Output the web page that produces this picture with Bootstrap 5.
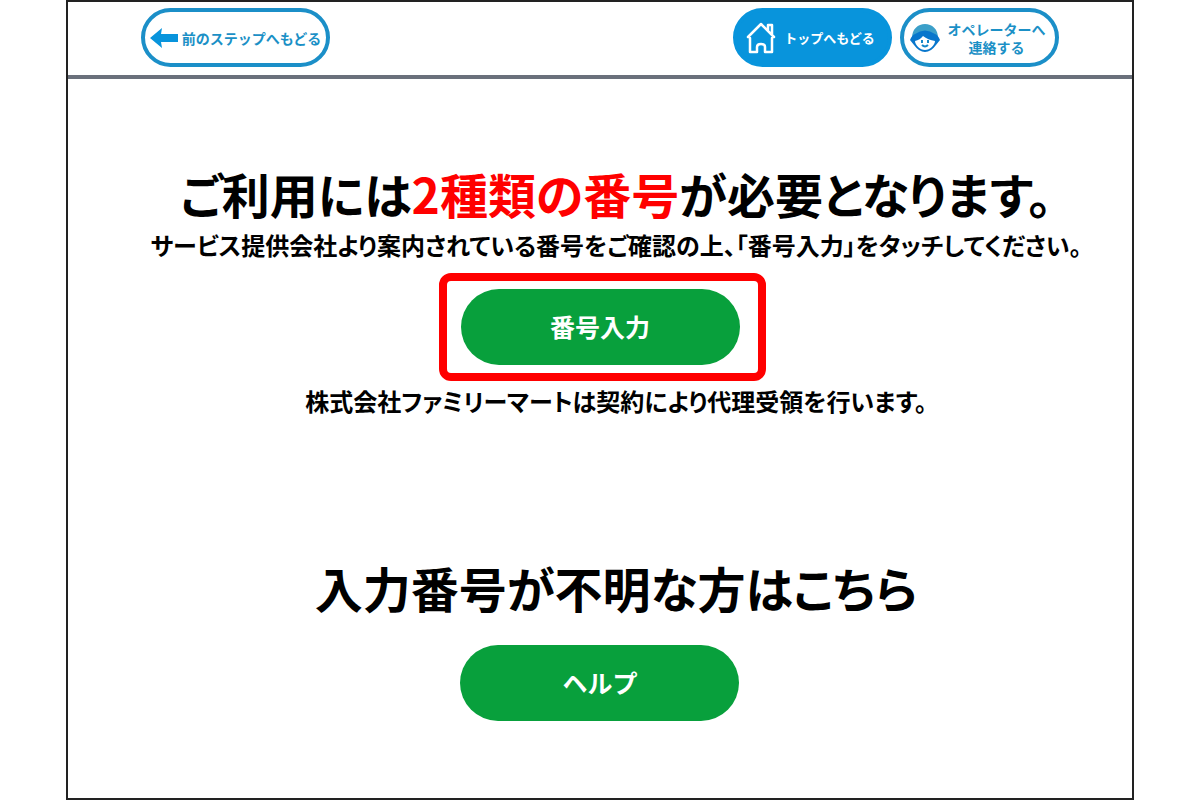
<!DOCTYPE html>
<html lang="ja">
<head>
<meta charset="utf-8">
<meta name="viewport" content="width=device-width, initial-scale=1">
<title>番号入力のご案内</title>
<link href="https://cdn.jsdelivr.net/npm/bootstrap@5.3.0/dist/css/bootstrap.min.css" rel="stylesheet">
<style>
  body { font-family: "Noto Sans CJK JP", sans-serif; font-feature-settings: "palt"; color: #000; }
  .kiosk { width: 89%; border: 2px solid #222; }
  .kiosk-header { border-bottom: 4px solid #6a707b; padding: 6px 73px 8px; }
  .pill { --bs-btn-border-radius: 30px; --bs-btn-border-width: 4px; --bs-btn-padding-y: 0; --bs-btn-padding-x: 6px;
    --bs-btn-font-size: 14px; --bs-btn-font-weight: 700; --bs-btn-line-height: 18px;
    --bs-btn-color: #1b90c6; --bs-btn-bg: #fff; --bs-btn-border-color: #1b8fc8; height: 59px; }
  .pill svg { flex: none; }
  .pill-solid { --bs-btn-color: #fff; --bs-btn-bg: #0894dc; --bs-btn-border-color: #0894dc; --bs-btn-font-size: 13px; }
  .pill-back { width: 189px; }
  .pill-side { width: 159px; padding-right: 10px; }
  .headline { font-size: 48px; line-height: 56px; font-weight: 700; }
  .guide { font-size: 24px; line-height: 32px; font-weight: 700; }
  .key { color: #f00; }
  .focus-frame { border: 8px solid #f00; border-radius: 12px; padding: 8px 18px 8px 14px; }
  .action { --bs-btn-border-radius: 38px; --bs-btn-border-width: 0; --bs-btn-font-size: 25px; --bs-btn-font-weight: 700;
    --bs-btn-color: #fff; --bs-btn-bg: #08a03c; --bs-btn-hover-bg: #078a34; --bs-btn-hover-color: #fff; width: 279px; height: 76px; }
  .kiosk-main { padding-top: 86px; }
  .intro { margin-bottom: 12px; }
  .shifted { padding-left: 32px; }
  .help-area { margin-top: 142px; }
  .help-title { margin-bottom: 30px; }
</style>
</head>
<body>
<div class="kiosk mx-auto min-vh-100 d-flex flex-column">
  <header class="kiosk-header d-flex justify-content-between flex-wrap gap-2">
    <button type="button" class="btn pill pill-back d-flex align-items-center justify-content-center text-nowrap">
      <svg width="28" height="20" viewBox="0 0 28 20" aria-hidden="true"><path fill="#0894dc" d="M0 10 12 0 11 6H28V14H11L12 20Z"/></svg>
      <span class="ms-1">前のステップへもどる</span>
    </button>
    <div class="d-flex gap-2">
      <button type="button" class="btn pill pill-solid pill-side d-flex align-items-center justify-content-center text-nowrap">
        <svg width="30" height="32" viewBox="0 0 30 32" fill="none" stroke="#fff" stroke-width="2.5" stroke-linejoin="round" stroke-linecap="round" aria-hidden="true"><path d="M2 15 15 2 28 15M22 8V3h4v9M4 16v14h7v-5q0-3 4-3t4 3v5h7V16"/></svg>
        <span class="ms-2">トップへもどる</span>
      </button>
      <button type="button" class="btn pill pill-side d-flex align-items-center justify-content-center text-nowrap">
        <svg width="30" height="30" viewBox="0 0 30 30" aria-hidden="true">
          <path fill="#3b9fc9" d="M2 15C2 6 8 1 15 1s13 5 13 14Z"/>
          <path fill="#0876cc" d="M0 17Q2 12 5 11 15 4 25 11q3 1 5 6l-4 5Q21 29 15 29T4 22Z"/>
          <path fill="#fff" d="M5 18q5-1 8-5 5 4 12 5c0 4-5 9-10 9S5 22 5 18Z"/>
          <path d="M12 17v3M18 17v3M12 22q3 3 6 0" stroke="#1787c9" stroke-width="2" fill="none"/>
        </svg>
        <span class="ms-2">オペレーターへ<br>連絡する</span>
      </button>
    </div>
  </header>
  <main class="kiosk-main text-center d-flex flex-column align-items-center">
    <h1 class="headline shifted mb-2">ご利用には<span class="key">2種類の番号</span>が必要となります。</h1>
    <p class="guide intro shifted">サービス提供会社より案内されている番号をご確認の上、「番号入力」をタッチしてください。</p>
    <div class="focus-frame ms-1"><button type="button" class="btn action">番号入力</button></div>
    <p class="guide shifted mt-1 mb-0">株式会社ファミリーマートは契約により代理受領を行います。</p>
    <section class="help-area d-flex flex-column align-items-center">
      <h2 class="headline help-title shifted">入力番号が不明な方はこちら</h2>
      <button type="button" class="btn action">ヘルプ</button>
    </section>
  </main>
</div>
<script src="https://cdn.jsdelivr.net/npm/bootstrap@5.3.0/dist/js/bootstrap.bundle.min.js"></script>
</body>
</html>
